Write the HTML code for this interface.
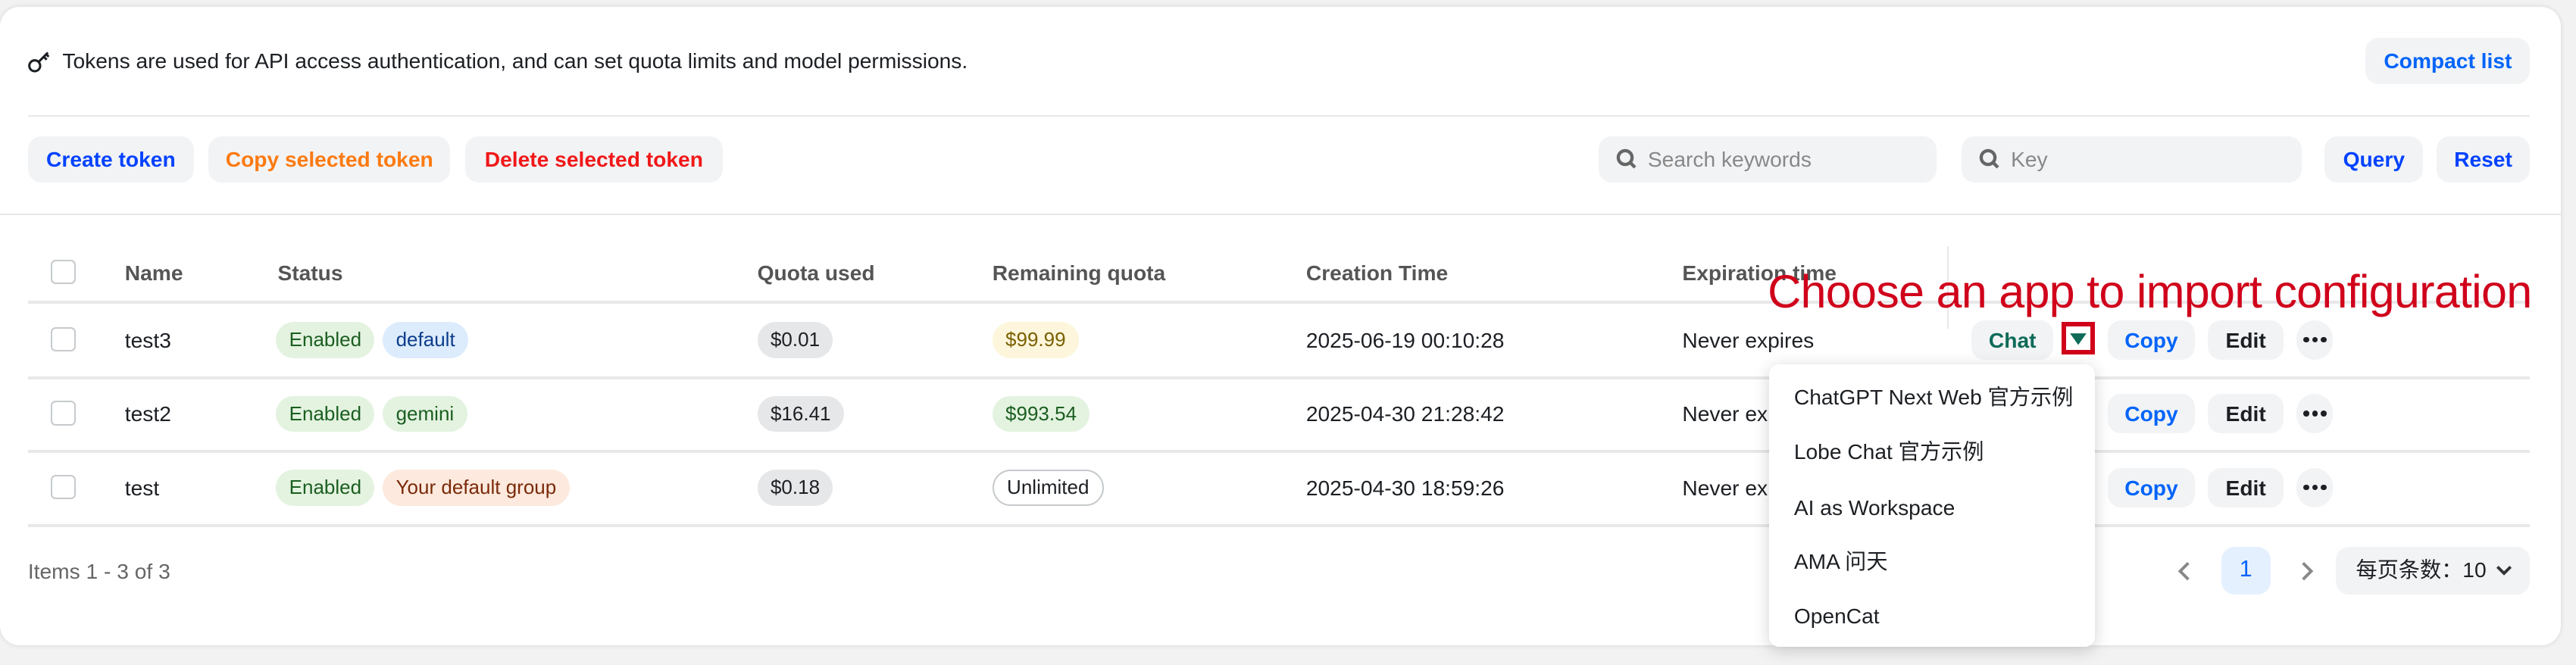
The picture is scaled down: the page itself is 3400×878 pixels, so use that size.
<!DOCTYPE html>
<html><head><meta charset="utf-8"><style>
*{box-sizing:border-box;margin:0;padding:0}
html,body{width:3400px;height:878px;overflow:hidden;background:#f2f2f3}
#w{zoom:2.16837;width:1568px;height:405px;position:relative;font-family:"Liberation Sans","Noto Sans CJK SC",sans-serif;font-size:13px;color:#1c1f23}
.card{position:absolute;left:0;top:4px;width:1559px;height:389px;background:#fff;border-radius:12px;box-shadow:0 0 3px rgba(0,0,0,.12)}
.a{position:absolute;white-space:nowrap;line-height:16px}
.btn{position:absolute;height:28px;line-height:28px;border-radius:8px;background:#f2f3f5;font-weight:bold;text-align:center;font-size:13px}
.hl{position:absolute;height:1px;background:#e8e8ea}
.cb{position:absolute;width:15px;height:15px;border:1px solid #c6cacd;border-radius:3px;left:31px;background:#fff}
.tag{position:absolute;height:22px;line-height:22px;border-radius:11px;padding:0 8px;font-size:12px}
.inp{position:absolute;height:28px;border-radius:8px;background:#f2f3f5;color:#888;line-height:28px;padding-left:30px}
.mi{position:absolute;left:15px;font-size:13px;line-height:16px;height:16px;white-space:nowrap}
.th{color:#555;font-weight:bold}
.dots{position:absolute;width:22px;height:24px;border-radius:12px;background:#f2f3f5}
.dots i{position:absolute;top:10px;width:3.5px;height:3.5px;border-radius:50%;background:#1c1f23}
</style></head><body><div id="w">
<div class="card"></div>
<svg class="a" style="left:16px;top:29px" width="16" height="16" viewBox="0 0 16 16" fill="none" stroke="#1c1f23" stroke-width="1.4"><circle cx="5" cy="11" r="3.3"/><path d="M7.5 8.5L13 3M10.5 5.5l1.8 1.8M12 4l1.5 1.5"/></svg>
<div class="a" style="left:38px;top:29px">Tokens are used for API access authentication, and can set quota limits and model permissions.</div>
<div class="btn" style="left:1440px;top:23px;width:100px;color:#0064fa">Compact list</div>
<div class="hl" style="left:17px;top:70px;width:1523px"></div>
<div class="btn" style="left:17px;top:83px;width:101px;color:#0042ff">Create token</div>
<div class="btn" style="left:127px;top:83px;width:147px;color:#fc7a11">Copy selected token</div>
<div class="btn" style="left:283px;top:83px;width:157px;color:#f01818">Delete selected token</div>
<div class="inp" style="left:973px;top:83px;width:206px">Search keywords</div>
<div class="inp" style="left:1194px;top:83px;width:207px">Key</div>
<svg class="a" style="left:983px;top:90px" width="14" height="14" viewBox="0 0 14 14" fill="none" stroke="#666" stroke-width="2"><circle cx="6" cy="6" r="4.2"/><path d="M9 9l3 3"/></svg>
<svg class="a" style="left:1204px;top:90px" width="14" height="14" viewBox="0 0 14 14" fill="none" stroke="#666" stroke-width="2"><circle cx="6" cy="6" r="4.2"/><path d="M9 9l3 3"/></svg>
<div class="btn" style="left:1415px;top:83px;width:60px;color:#0042ff">Query</div>
<div class="btn" style="left:1483px;top:83px;width:57px;color:#0042ff">Reset</div>
<div class="hl" style="left:0;top:130px;width:1559px"></div>
<div class="cb" style="top:158px"></div>
<div class="a th" style="left:76px;top:158px">Name</div>
<div class="a th" style="left:169px;top:158px">Status</div>
<div class="a th" style="left:461px;top:158px">Quota used</div>
<div class="a th" style="left:604px;top:158px">Remaining quota</div>
<div class="a th" style="left:795px;top:158px">Creation Time</div>
<div class="a th" style="left:1024px;top:158px">Expiration time</div>
<div class="a" style="left:1185px;top:150px;width:1px;height:50px;background:#e8e8ea"></div>
<div class="hl" style="left:17px;top:183px;width:1523px;height:2px"></div>
<div class="hl" style="left:17px;top:229px;width:1523px;height:2px"></div>
<div class="hl" style="left:17px;top:274px;width:1523px;height:2px"></div>
<div class="hl" style="left:17px;top:319px;width:1523px;height:2px"></div>
<div class="cb" style="top:199px"></div><div class="cb" style="top:244px"></div><div class="cb" style="top:289px"></div>
<div class="a" style="left:76px;top:199px">test3</div>
<div class="a" style="left:76px;top:244px">test2</div>
<div class="a" style="left:76px;top:289px">test</div>
<div class="tag" style="left:168px;top:196px;background:#e3f3e0;color:#1b5e20">Enabled</div>
<div class="tag" style="left:233px;top:196px;background:#dcecfd;color:#0d3c8a">default</div>
<div class="tag" style="left:168px;top:241px;background:#e3f3e0;color:#1b5e20">Enabled</div>
<div class="tag" style="left:233px;top:241px;background:#e3f3e0;color:#1b5e20">gemini</div>
<div class="tag" style="left:168px;top:286px;background:#e3f3e0;color:#1b5e20">Enabled</div>
<div class="tag" style="left:233px;top:286px;background:#fde9dd;color:#7a2a0a">Your default group</div>
<div class="tag" style="left:461px;top:196px;background:#e6e7e9">$0.01</div>
<div class="tag" style="left:461px;top:241px;background:#e6e7e9">$16.41</div>
<div class="tag" style="left:461px;top:286px;background:#e6e7e9">$0.18</div>
<div class="tag" style="left:604px;top:196px;background:#fdf6dc;color:#7a6000">$99.99</div>
<div class="tag" style="left:604px;top:241px;background:#e3f3e0;color:#1b5e20">$993.54</div>
<div class="tag" style="left:604px;top:286px;border:1px solid #c6cacd;line-height:20px">Unlimited</div>
<div class="a" style="left:795px;top:199px">2025-06-19 00:10:28</div>
<div class="a" style="left:795px;top:244px">2025-04-30 21:28:42</div>
<div class="a" style="left:795px;top:289px">2025-04-30 18:59:26</div>
<div class="a" style="left:1024px;top:199px">Never expires</div>
<div class="a" style="left:1024px;top:244px">Never ex</div>
<div class="a" style="left:1024px;top:289px">Never ex</div>
<div class="btn" style="left:1200px;top:195px;width:50px;height:24px;line-height:24px;color:#0d6b58">Chat</div>
<div class="a" style="left:1255px;top:196px;width:20px;height:20px;border:3px solid #d0021b"></div>
<svg class="a" style="left:1259px;top:202px" width="12" height="9" viewBox="0 0 12 9"><path d="M1 1h10L6 8z" fill="#0d6b58"/></svg>
<div class="btn" style="left:1283px;top:195px;width:53px;height:24px;line-height:24px;color:#0064fa">Copy</div>
<div class="btn" style="left:1344px;top:195px;width:46px;height:24px;line-height:24px">Edit</div>
<div class="dots" style="left:1398px;top:195px"><i style="left:4px"></i><i style="left:9.3px"></i><i style="left:14.6px"></i></div>
<div class="btn" style="left:1283px;top:240px;width:53px;height:24px;line-height:24px;color:#0064fa">Copy</div>
<div class="btn" style="left:1344px;top:240px;width:46px;height:24px;line-height:24px">Edit</div>
<div class="dots" style="left:1398px;top:240px"><i style="left:4px"></i><i style="left:9.3px"></i><i style="left:14.6px"></i></div>
<div class="btn" style="left:1283px;top:285px;width:53px;height:24px;line-height:24px;color:#0064fa">Copy</div>
<div class="btn" style="left:1344px;top:285px;width:46px;height:24px;line-height:24px">Edit</div>
<div class="dots" style="left:1398px;top:285px"><i style="left:4px"></i><i style="left:9.3px"></i><i style="left:14.6px"></i></div>
<div class="a" style="left:1076px;top:162px;font-size:28.2px;line-height:32px;color:#d0021b;letter-spacing:-0.35px">Choose an app to import configuration</div>
<div class="a" style="left:17px;top:340px;color:#666">Items 1 - 3 of 3</div>
<svg class="a" style="left:1324px;top:341px" width="12" height="14" viewBox="0 0 12 14" fill="none" stroke="#888" stroke-width="1.8"><path d="M8 2L3 7l5 5"/></svg>
<div class="btn" style="left:1352px;top:333px;width:30px;height:29px;background:#e5f0ff;color:#0064fa;font-weight:normal;font-size:14px">1</div>
<svg class="a" style="left:1398px;top:341px" width="12" height="14" viewBox="0 0 12 14" fill="none" stroke="#888" stroke-width="1.8"><path d="M4 2l5 5-5 5"/></svg>
<div class="btn" style="left:1422px;top:333px;width:118px;height:29px;font-weight:normal;text-align:left;padding-left:12px">每页条数：10</div>
<svg class="a" style="left:1518px;top:343px" width="12" height="9" viewBox="0 0 12 9" fill="none" stroke="#333" stroke-width="1.8"><path d="M2 2l4 4 4-4"/></svg>
<div class="a" style="left:1077px;top:222px;width:198px;height:172px;background:#fff;border-radius:6px;box-shadow:0 2px 10px rgba(0,0,0,.18)">
<div class="mi" style="top:12px">ChatGPT Next Web 官方示例</div>
<div class="mi" style="top:45px">Lobe Chat 官方示例</div>
<div class="mi" style="top:79px">AI as Workspace</div>
<div class="mi" style="top:112px">AMA 问天</div>
<div class="mi" style="top:145px">OpenCat</div>
</div>
</div></body></html>
